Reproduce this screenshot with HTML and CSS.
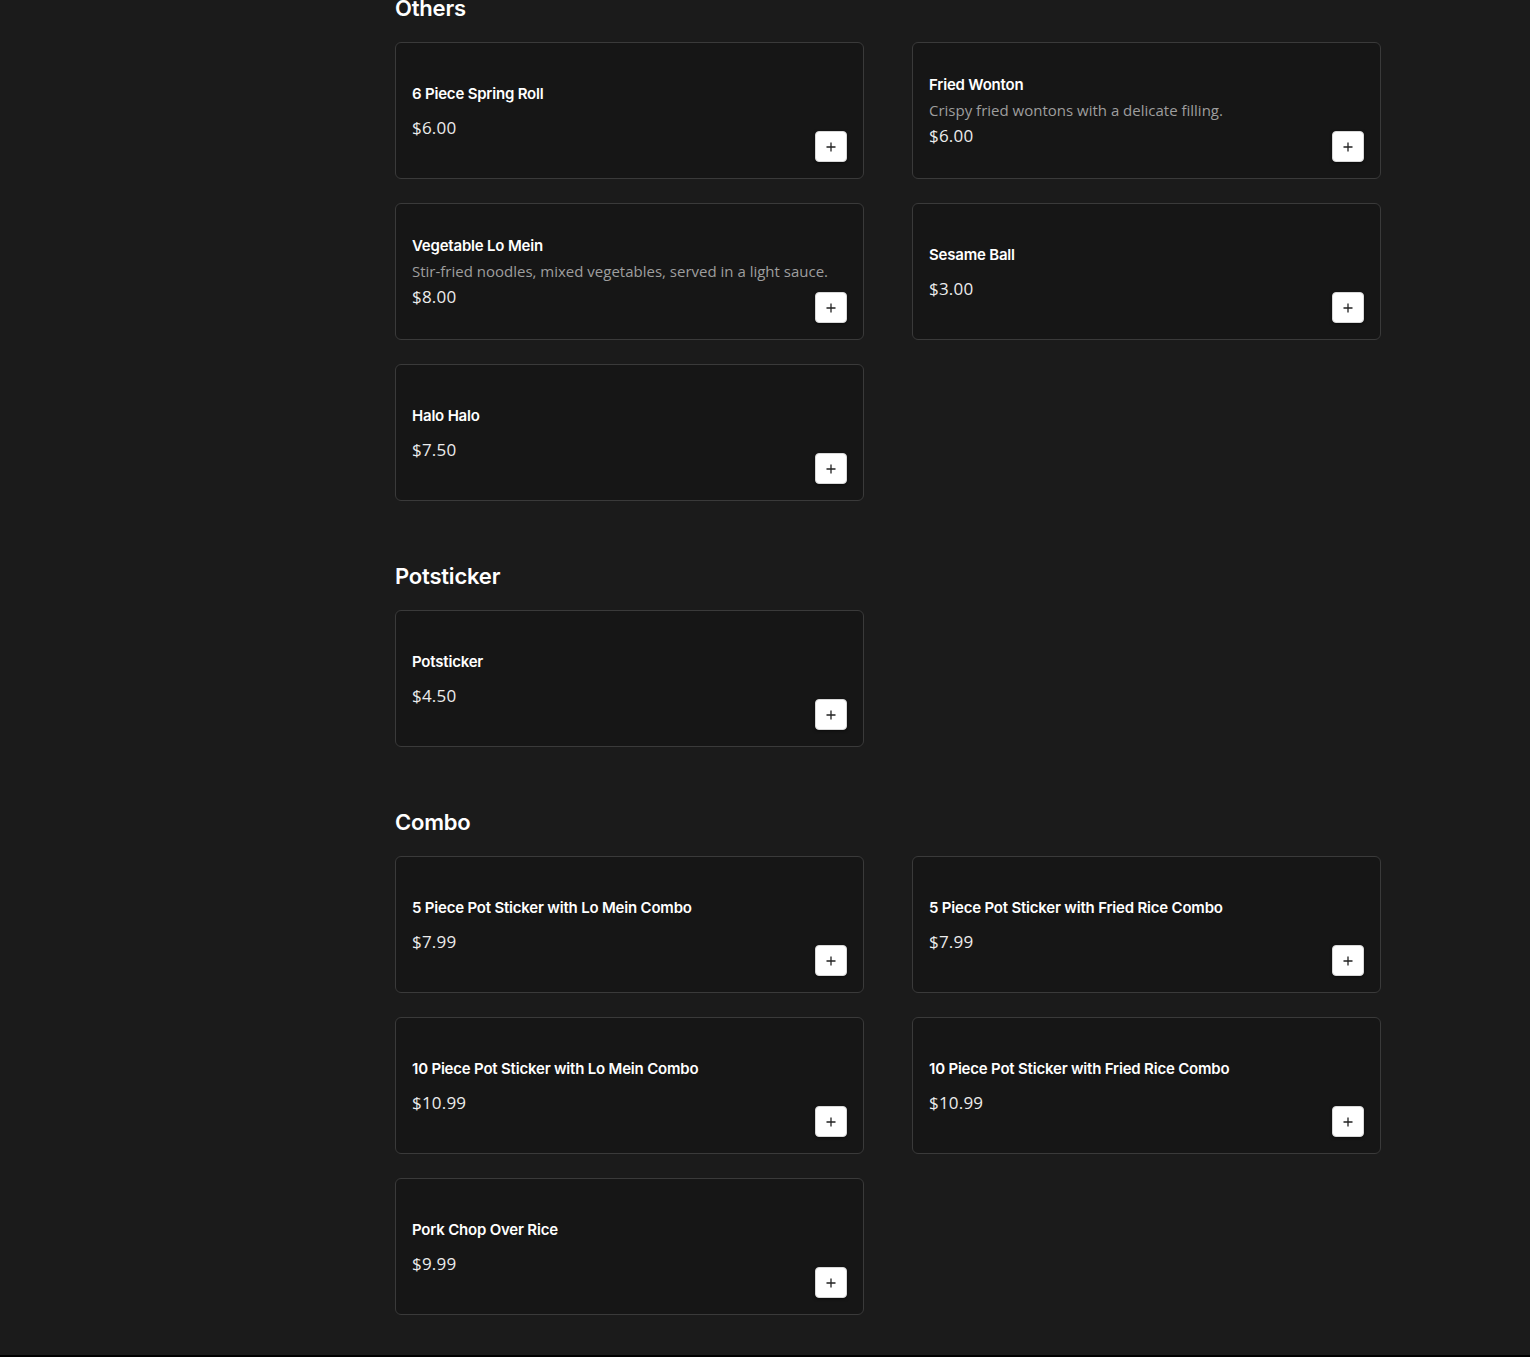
FILE: index.html
```html
<!DOCTYPE html>
<html lang="en">
<head>
<meta charset="utf-8">
<title>Menu</title>
<link rel="stylesheet" href="styles.css">
</head>
<body>
<main class="menu">
  <section class="section first">
    <h2 class="section-title">Others</h2>
    <div class="grid">
      <div class="card"><div class="info"><h3 class="name solo">6 Piece Spring Roll</h3><p class="price">$6.00</p></div><button class="add" aria-label="Add"><svg viewBox="0 0 12 12" width="12" height="12"><path d="M6 1.5v9M1.5 6h9" stroke="#222" stroke-width="1.3" fill="none"/></svg></button></div>
      <div class="card"><div class="info"><h3 class="name">Fried Wonton</h3><p class="desc">Crispy fried wontons with a delicate filling.</p><p class="price">$6.00</p></div><button class="add" aria-label="Add"><svg viewBox="0 0 12 12" width="12" height="12"><path d="M6 1.5v9M1.5 6h9" stroke="#222" stroke-width="1.3" fill="none"/></svg></button></div>
      <div class="card"><div class="info"><h3 class="name">Vegetable Lo Mein</h3><p class="desc">Stir-fried noodles, mixed vegetables, served in a light sauce.</p><p class="price">$8.00</p></div><button class="add" aria-label="Add"><svg viewBox="0 0 12 12" width="12" height="12"><path d="M6 1.5v9M1.5 6h9" stroke="#222" stroke-width="1.3" fill="none"/></svg></button></div>
      <div class="card"><div class="info"><h3 class="name solo">Sesame Ball</h3><p class="price">$3.00</p></div><button class="add" aria-label="Add"><svg viewBox="0 0 12 12" width="12" height="12"><path d="M6 1.5v9M1.5 6h9" stroke="#222" stroke-width="1.3" fill="none"/></svg></button></div>
      <div class="card"><div class="info"><h3 class="name solo">Halo Halo</h3><p class="price">$7.50</p></div><button class="add" aria-label="Add"><svg viewBox="0 0 12 12" width="12" height="12"><path d="M6 1.5v9M1.5 6h9" stroke="#222" stroke-width="1.3" fill="none"/></svg></button></div>
    </div>
  </section>
  <section class="section">
    <h2 class="section-title">Potsticker</h2>
    <div class="grid">
      <div class="card"><div class="info"><h3 class="name solo">Potsticker</h3><p class="price">$4.50</p></div><button class="add" aria-label="Add"><svg viewBox="0 0 12 12" width="12" height="12"><path d="M6 1.5v9M1.5 6h9" stroke="#222" stroke-width="1.3" fill="none"/></svg></button></div>
    </div>
  </section>
  <section class="section">
    <h2 class="section-title">Combo</h2>
    <div class="grid">
      <div class="card"><div class="info"><h3 class="name solo">5 Piece Pot Sticker with Lo Mein Combo</h3><p class="price">$7.99</p></div><button class="add" aria-label="Add"><svg viewBox="0 0 12 12" width="12" height="12"><path d="M6 1.5v9M1.5 6h9" stroke="#222" stroke-width="1.3" fill="none"/></svg></button></div>
      <div class="card"><div class="info"><h3 class="name solo">5 Piece Pot Sticker with Fried Rice Combo</h3><p class="price">$7.99</p></div><button class="add" aria-label="Add"><svg viewBox="0 0 12 12" width="12" height="12"><path d="M6 1.5v9M1.5 6h9" stroke="#222" stroke-width="1.3" fill="none"/></svg></button></div>
      <div class="card"><div class="info"><h3 class="name solo">10 Piece Pot Sticker with Lo Mein Combo</h3><p class="price">$10.99</p></div><button class="add" aria-label="Add"><svg viewBox="0 0 12 12" width="12" height="12"><path d="M6 1.5v9M1.5 6h9" stroke="#222" stroke-width="1.3" fill="none"/></svg></button></div>
      <div class="card"><div class="info"><h3 class="name solo">10 Piece Pot Sticker with Fried Rice Combo</h3><p class="price">$10.99</p></div><button class="add" aria-label="Add"><svg viewBox="0 0 12 12" width="12" height="12"><path d="M6 1.5v9M1.5 6h9" stroke="#222" stroke-width="1.3" fill="none"/></svg></button></div>
      <div class="card"><div class="info"><h3 class="name solo">Pork Chop Over Rice</h3><p class="price">$9.99</p></div><button class="add" aria-label="Add"><svg viewBox="0 0 12 12" width="12" height="12"><path d="M6 1.5v9M1.5 6h9" stroke="#222" stroke-width="1.3" fill="none"/></svg></button></div>
    </div>
  </section>
</main>
<footer class="foot"></footer>
</body>
</html>
```

FILE: styles.css
```css
* { box-sizing: border-box; }
html, body { margin: 0; padding: 0; background: #1b1b1b; }
body {
  font-family: "Lato", "Open Sans", sans-serif;
  color: #fff;
  height: 1357px;
  overflow: hidden;
  display: flex;
  flex-direction: column;
}
.menu {
  width: 986px;
  margin-left: 395px;
  margin-top: -8px;
  padding-bottom: 40px;
}
.section { margin-top: 59px; }
.section.first { margin-top: 0; }
.section-title {
  margin: 0 0 18px;
  font-family: "Inter", sans-serif;
  font-weight: 600;
  font-size: 22px;
  line-height: 32px;
  letter-spacing: -0.2px;
}
.grid {
  display: grid;
  grid-template-columns: 469px 469px;
  column-gap: 48px;
  row-gap: 24px;
}
.card {
  height: 137px;
  background: #161616;
  border: 1px solid #3a3a3a;
  border-radius: 6px;
  padding: 0 16px;
  display: flex;
  justify-content: space-between;
}
.info {
  flex: 1;
  min-width: 0;
  align-self: center;
  padding-top: 2px;
}
.name {
  margin: 0 0 5px;
  font-family: "Inter", sans-serif;
  font-weight: 600;
  font-size: 15px;
  line-height: 20px;
  letter-spacing: -0.2px;
  color: #fff;
}
.name.solo { margin-bottom: 12px; }
.desc {
  margin: 0;
  font-family: "Open Sans", sans-serif;
  font-size: 15px;
  line-height: 20px;
  color: #9e9e9e;
  white-space: nowrap;
}
.price {
  margin: 4px 0 0;
  font-family: "Open Sans", sans-serif;
  font-size: 17px;
  line-height: 24px;
  letter-spacing: 0.2px;
  color: #ececec;
}
.add {
  flex: none;
  align-self: flex-end;
  margin-bottom: 16px;
  width: 32px;
  height: 31px;
  padding: 0;
  border: 1px solid #d8d8d8;
  border-radius: 4px;
  background: #fff;
  box-shadow: 0 1px 3px rgba(0,0,0,0.5);
  display: flex;
  align-items: center;
  justify-content: center;
}
.foot {
  margin-top: auto;
  height: 3px;
  background: #000;
}
```
